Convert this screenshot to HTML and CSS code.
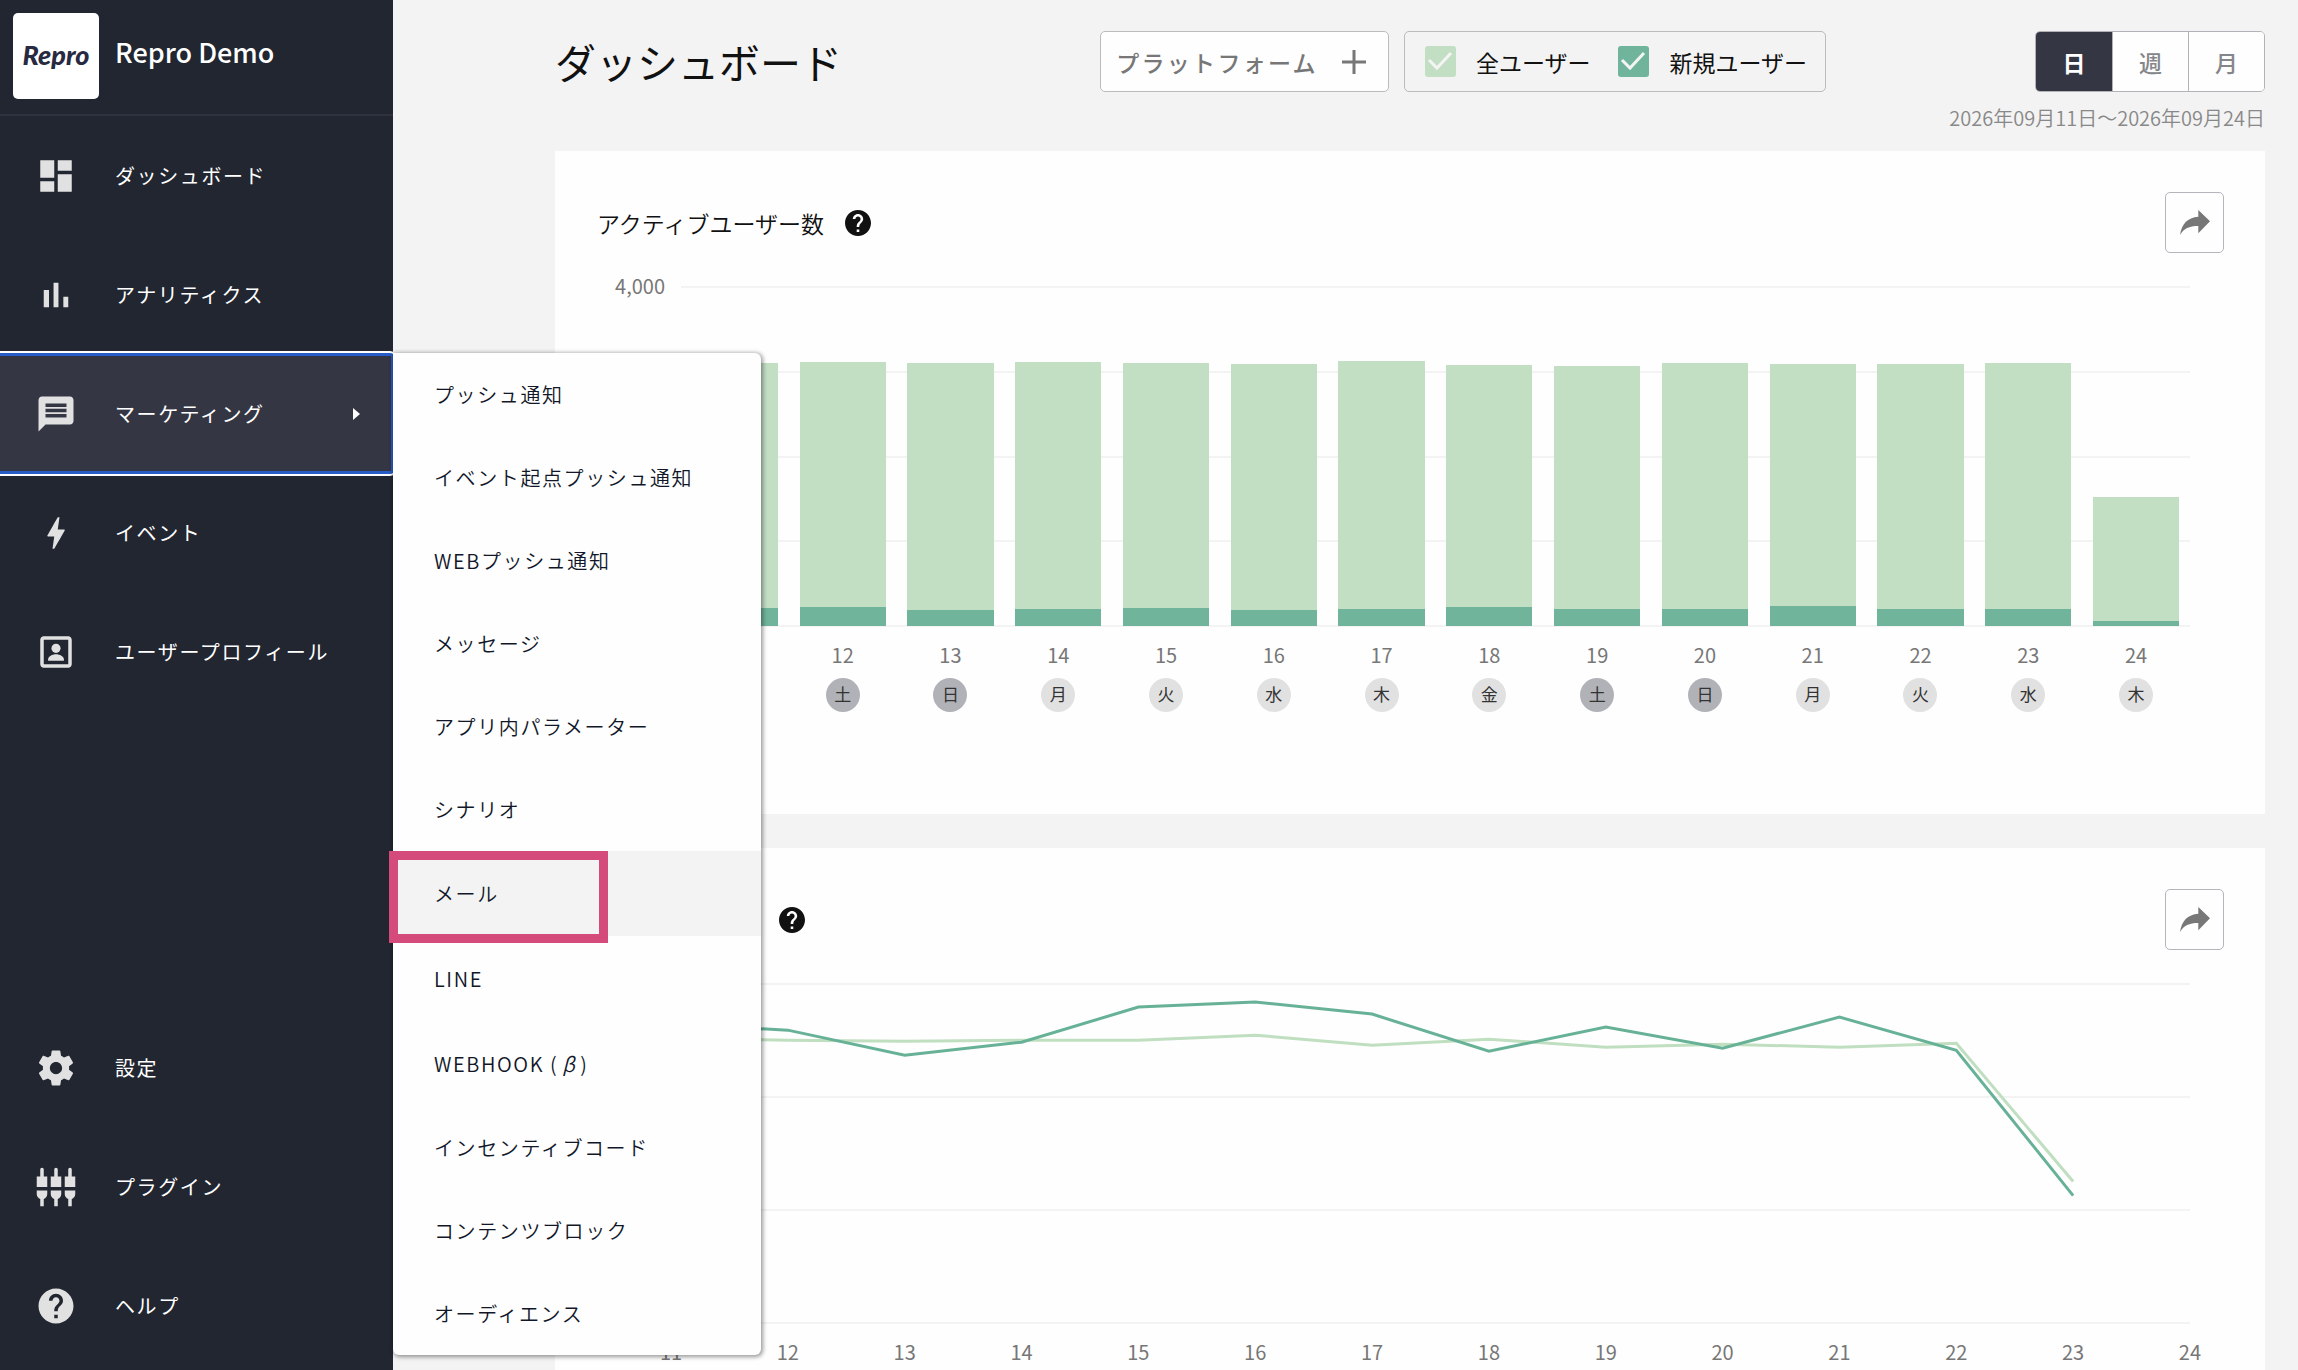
FILE: index.html
```html
<!DOCTYPE html>
<html lang="ja">
<head>
<meta charset="utf-8">
<meta name="viewport" content="width=device-width, initial-scale=1">
<title>ダッシュボード | Repro Demo</title>
<link rel="stylesheet" href="styles.css">
</head>
<body>
<div class="app">
  <aside class="sidebar">
    <div class="brand">
      <div class="brand-logo">Repro</div>
      <div class="brand-name">Repro Demo</div>
    </div>
    <nav class="nav">
      <ul class="nav-list">
        <li class="nav-item"><a class="nav-link" href="#">
          <svg class="icon" viewBox="0 0 24 24"><path d="M3 13h8V3H3v10zm0 8h8v-6H3v6zm10 0h8V11h-8v10zm0-18v6h8V3h-8z"/></svg>
          <span>ダッシュボード</span></a></li>
        <li class="nav-item"><a class="nav-link" href="#">
          <svg class="icon" viewBox="0 0 24 24"><path d="M5 9.2h3V19H5zM10.6 5h2.8v14h-2.8zm5.6 8H19v6h-2.8z"/></svg>
          <span>アナリティクス</span></a></li>
        <li class="nav-item">
          <a class="nav-link nav-link-active" href="#">
            <svg class="icon" viewBox="0 0 24 24"><path d="M20 2H4c-1.1 0-1.99.9-1.99 2L2 22l4-4h14c1.1 0 2-.9 2-2V4c0-1.1-.9-2-2-2zm-2 12H6v-2h12v2zm0-3H6V9h12v2zm0-3H6V6h12v2z"/></svg>
            <span>マーケティング</span>
            <svg class="caret" viewBox="0 0 7 12"><path d="M0 0l7 6-7 6z"/></svg>
          </a>
          <ul class="flyout">
            <li><a class="flyout-link" href="#">プッシュ通知</a></li>
            <li><a class="flyout-link" href="#">イベント起点プッシュ通知</a></li>
            <li><a class="flyout-link" href="#">WEBプッシュ通知</a></li>
            <li><a class="flyout-link" href="#">メッセージ</a></li>
            <li><a class="flyout-link" href="#">アプリ内パラメーター</a></li>
            <li><a class="flyout-link" href="#">シナリオ</a></li>
            <li class="flyout-marked"><a class="flyout-link flyout-link-tall flyout-link-hover" href="#">メール</a></li>
            <li><a class="flyout-link flyout-link-tall" href="#">LINE</a></li>
            <li><a class="flyout-link flyout-link-tall" href="#">WEBHOOK (<i class="beta">β</i>)</a></li>
            <li><a class="flyout-link" href="#">インセンティブコード</a></li>
            <li><a class="flyout-link" href="#">コンテンツブロック</a></li>
            <li><a class="flyout-link" href="#">オーディエンス</a></li>
          </ul>
        </li>
        <li class="nav-item"><a class="nav-link" href="#">
          <svg class="icon" viewBox="0 0 24 24"><path d="M11 21h-1l1-7H7.5c-.58 0-.57-.32-.38-.66.19-.34.05-.08.07-.12C8.48 10.94 10.42 7.54 13 3h1l-1 7h3.5c.49 0 .56.33.47.51l-.07.15C12.96 17.55 11 21 11 21z"/></svg>
          <span>イベント</span></a></li>
        <li class="nav-item"><a class="nav-link" href="#">
          <svg class="icon" viewBox="0 0 24 24"><path d="M19 5v14H5V5h14m0-2H5c-1.1 0-2 .9-2 2v14c0 1.1.9 2 2 2h14c1.1 0 2-.9 2-2V5c0-1.1-.9-2-2-2z"/><circle cx="12" cy="9.9" r="2.6"/><path d="M7.5 17v-.7c0-1.8 2.4-3 4.5-3s4.5 1.2 4.5 3v.7z"/></svg>
          <span>ユーザープロフィール</span></a></li>
      </ul>
      <ul class="nav-list nav-list-bottom">
        <li class="nav-item"><a class="nav-link" href="#">
          <svg class="icon" viewBox="0 0 24 24"><path d="M19.43 12.98c.04-.32.07-.64.07-.98s-.03-.66-.07-.98l2.11-1.65c.19-.15.24-.42.12-.64l-2-3.46c-.12-.22-.39-.3-.61-.22l-2.49 1c-.52-.4-1.08-.73-1.69-.98l-.38-2.65C14.46 2.18 14.25 2 14 2h-4c-.25 0-.46.18-.49.42l-.38 2.65c-.61.25-1.17.59-1.69.98l-2.49-1c-.23-.09-.49 0-.61.22l-2 3.46c-.13.22-.07.49.12.64l2.11 1.65c-.04.32-.07.65-.07.98s.03.66.07.98l-2.11 1.65c-.19.15-.24.42-.12.64l2 3.46c.12.22.39.3.61.22l2.49-1c.52.4 1.08.73 1.69.98l.38 2.65c.03.24.24.42.49.42h4c.25 0 .46-.18.49-.42l.38-2.65c.61-.25 1.17-.59 1.69-.98l2.49 1c.23.09.49 0 .61-.22l2-3.46c.12-.22.07-.49-.12-.64l-2.11-1.65zM12 15.5c-1.93 0-3.5-1.57-3.5-3.5s1.57-3.5 3.5-3.5 3.5 1.57 3.5 3.5-1.57 3.5-3.5 3.5z"/></svg>
          <span>設定</span></a></li>
        <li class="nav-item"><a class="nav-link" href="#">
          <svg class="icon" viewBox="0 0 24 24"><path d="M5 2c0-.55-.45-1-1-1s-1 .45-1 1v4H1v6h6V6H5V2zm4 14c0 1.3.84 2.4 2 2.82V23h2v-4.18c1.16-.41 2-1.51 2-2.82v-2H9v2zm-8 0c0 1.3.84 2.4 2 2.82V23h2v-4.18C6.16 18.4 7 17.3 7 16v-2H1v2zM21 6V2c0-.55-.45-1-1-1s-1 .45-1 1v4h-2v6h6V6h-2zm-8-4c0-.55-.45-1-1-1s-1 .45-1 1v4H9v6h6V6h-2V2zm4 14c0 1.3.84 2.4 2 2.82V23h2v-4.18c1.16-.41 2-1.51 2-2.82v-2h-6v2z"/></svg>
          <span>プラグイン</span></a></li>
        <li class="nav-item"><a class="nav-link" href="#">
          <svg class="icon" viewBox="0 0 24 24"><path d="M12 2C6.48 2 2 6.48 2 12s4.48 10 10 10 10-4.48 10-10S17.52 2 12 2zm1 17h-2v-2h2v2zm2.07-7.75l-.9.92C13.45 12.9 13 13.5 13 15h-2v-.5c0-1.1.45-2.1 1.17-2.83l1.24-1.26c.37-.36.59-.86.59-1.41 0-1.1-.9-2-2-2s-2 .9-2 2H8c0-2.21 1.79-4 4-4s4 1.79 4 4c0 .88-.36 1.68-.93 2.25z"/></svg>
          <span>ヘルプ</span></a></li>
      </ul>
    </nav>
  </aside>

  <main class="main">
    <header class="header">
      <h1 class="title">ダッシュボード</h1>
      <div class="filters">
        <button class="platform" type="button">プラットフォーム
          <svg class="plus" viewBox="0 0 24 24"><path d="M12 0v24M0 12h24"/></svg>
        </button>
        <div class="segments">
          <label class="check"><input class="checkbox checkbox-all" type="checkbox" checked>全ユーザー</label>
          <label class="check"><input class="checkbox checkbox-new" type="checkbox" checked>新規ユーザー</label>
        </div>
      </div>
      <div class="period">
        <div class="period-tabs">
          <button class="period-tab period-tab-active" type="button">日</button>
          <button class="period-tab" type="button">週</button>
          <button class="period-tab" type="button">月</button>
        </div>
        <p class="period-range">2026年09月11日〜2026年09月24日</p>
      </div>
    </header>

    <section class="card">
      <div class="card-head">
        <h2 class="card-title">アクティブユーザー数</h2>
        <svg class="help" viewBox="2 2 20 20"><path d="M12 2C6.48 2 2 6.48 2 12s4.48 10 10 10 10-4.48 10-10S17.52 2 12 2zm1 17h-2v-2h2v2zm2.07-7.75l-.9.92C13.45 12.9 13 13.5 13 15h-2v-.5c0-1.1.45-2.1 1.17-2.83l1.24-1.26c.37-.36.59-.86.59-1.41 0-1.1-.9-2-2-2s-2 .9-2 2H8c0-2.21 1.79-4 4-4s4 1.79 4 4c0 .88-.36 1.68-.93 2.25z"/></svg>
        <button class="share" type="button" aria-label="共有"><svg viewBox="0 0 30 25"><path d="M30 11.3L18.3 0v6.7C7.5 7.5 1.5 14 0 25c4-6.500 9-9 18.300-9v7.300z"/></svg></button>
      </div>
      <div class="chart">
        <div class="axis-y">4,000</div>
        <div class="plot">
          <div class="grid"><i></i><i></i><i></i><i></i><i></i></div>
          <div class="bars">
            <div class="bar" style="height:77.500%"><b style="height:18px"></b></div>
            <div class="bar" style="height:78%"><b style="height:19px"></b></div>
            <div class="bar" style="height:77.600%"><b style="height:16px"></b></div>
            <div class="bar" style="height:77.800%"><b style="height:17px"></b></div>
            <div class="bar" style="height:77.500%"><b style="height:18px"></b></div>
            <div class="bar" style="height:77.200%"><b style="height:16px"></b></div>
            <div class="bar" style="height:78.200%"><b style="height:17px"></b></div>
            <div class="bar" style="height:77%"><b style="height:19px"></b></div>
            <div class="bar" style="height:76.800%"><b style="height:17px"></b></div>
            <div class="bar" style="height:77.500%"><b style="height:17px"></b></div>
            <div class="bar" style="height:77.200%"><b style="height:20px"></b></div>
            <div class="bar" style="height:77.200%"><b style="height:17px"></b></div>
            <div class="bar" style="height:77.500%"><b style="height:17px"></b></div>
            <div class="bar" style="height:38%"><b style="height:5px"></b></div>
          </div>
        </div>
        <ol class="days">
          <li>11<span class="dow">金</span></li>
          <li>12<span class="dow dow-off">土</span></li>
          <li>13<span class="dow dow-off">日</span></li>
          <li>14<span class="dow">月</span></li>
          <li>15<span class="dow">火</span></li>
          <li>16<span class="dow">水</span></li>
          <li>17<span class="dow">木</span></li>
          <li>18<span class="dow">金</span></li>
          <li>19<span class="dow dow-off">土</span></li>
          <li>20<span class="dow dow-off">日</span></li>
          <li>21<span class="dow">月</span></li>
          <li>22<span class="dow">火</span></li>
          <li>23<span class="dow">水</span></li>
          <li>24<span class="dow">木</span></li>
        </ol>
      </div>
    </section>

    <section class="card">
      <div class="card-head">
        <h2 class="card-title">リテンション率</h2>
        <svg class="help" viewBox="2 2 20 20"><path d="M12 2C6.48 2 2 6.48 2 12s4.48 10 10 10 10-4.48 10-10S17.52 2 12 2zm1 17h-2v-2h2v2zm2.07-7.75l-.9.92C13.45 12.9 13 13.5 13 15h-2v-.5c0-1.1.45-2.1 1.17-2.83l1.24-1.26c.37-.36.59-.86.59-1.41 0-1.1-.9-2-2-2s-2 .9-2 2H8c0-2.21 1.79-4 4-4s4 1.79 4 4c0 .88-.36 1.68-.93 2.25z"/></svg>
        <button class="share" type="button" aria-label="共有"><svg viewBox="0 0 30 25"><path d="M30 11.3L18.3 0v6.7C7.5 7.5 1.5 14 0 25c4-6.500 9-9 18.300-9v7.300z"/></svg></button>
      </div>
      <div class="line-chart">
        <div class="plot">
          <div class="grid"><i></i><i></i><i></i><i></i></div>
          <svg class="lines" viewBox="0 0 1300 338" preserveAspectRatio="none">
            <polyline class="line-all" points="0,54 100,56 200,57 300,56 400,56 500,51 600,61 700,55 800,63 900,60 1000,63 1100,59 1200,197"/>
            <polyline class="line-new" points="0,40 100,46 200,71 300,58 400,23 500,18 600,30 700,67 800,43 900,64 1000,33 1100,66 1200,211"/>
          </svg>
        </div>
        <ol class="ticks">
          <li>11</li><li>12</li><li>13</li><li>14</li><li>15</li><li>16</li><li>17</li><li>18</li><li>19</li><li>20</li><li>21</li><li>22</li><li>23</li><li>24</li>
        </ol>
      </div>
    </section>
  </main>
</div>
</body>
</html>
```
FILE: styles.css
```css
*,
*::after {
  box-sizing: border-box;
}

body {
  margin: 0;
  background: #f3f3f3;
  color: #111;
  font-family: "Noto Sans CJK JP", "Noto Sans", sans-serif;
  font-size: 20px;
}

ul,
ol,
h1,
h2,
p {
  margin: 0;
  padding: 0;
  list-style: none;
  font-weight: 400;
}

a {
  color: inherit;
  text-decoration: none;
}

button {
  margin: 0;
  padding: 0;
  font: inherit;
  cursor: pointer;
}

.app {
  display: flex;
  height: 100vh;
  overflow: hidden;
}

/* Sidebar */

.sidebar {
  position: relative;
  z-index: 2;
  display: flex;
  flex: none;
  flex-direction: column;
  width: 393px;
  background: #212631;
  color: #fff;
}

.brand {
  display: flex;
  gap: 16px;
  height: 116px;
  padding: 13px;
  border-bottom: 2px solid #30313f;
}

.brand-logo {
  display: flex;
  align-items: center;
  justify-content: center;
  width: 86px;
  height: 86px;
  padding-bottom: 4px;
  border-radius: 5px;
  background: #fff;
  color: #272a40;
  font: italic 900 27px/1 Lato, sans-serif;
}

.brand-name {
  font-size: 27px;
  font-weight: 500;
  line-height: 78px;
}

.nav {
  display: flex;
  flex: 1;
  flex-direction: column;
}

.nav-list-bottom {
  margin-top: auto;
  padding-bottom: 5px;
}

.nav-item {
  position: relative;
}

.nav-link {
  display: flex;
  align-items: center;
  gap: 38px;
  height: 119px;
  padding: 0 33px 0 35px;
  letter-spacing: 0.08em;
}

.nav-link-active {
  border-radius: 0 3px 3px 0;
  background: #353643;
  box-shadow:
    inset 0 2px #265dc6,
    inset 0 -2px #265dc6,
    inset -2px 0 #265dc6,
    0 0 0 1px #265dc6,
    0 0 0 3px #fff;
}

.icon {
  flex: none;
  width: 42px;
  height: 42px;
  fill: #e1e1e1;
}

.caret {
  width: 7px;
  height: 12px;
  margin-left: auto;
  fill: #fff;
}

/* Flyout menu */

.flyout {
  position: absolute;
  top: -1px;
  left: 100%;
  width: 368px;
  border-radius: 0 6px 6px 6px;
  background: #fefefe;
  box-shadow: 1px 1px 4px 1px rgba(0, 0, 0, 0.4);
  color: #111729;
}

.flyout-link {
  display: flex;
  align-items: center;
  height: 83px;
  padding: 0 41px;
  font-weight: 350;
  letter-spacing: 0.08em;
  white-space: pre;
}

.flyout-link-tall {
  height: 85px;
}

.flyout-link-hover {
  background: #f3f3f3;
}

.flyout-marked {
  position: relative;
}

.flyout-marked::after {
  position: absolute;
  top: 0;
  left: -4px;
  width: 219px;
  height: 92px;
  border: 9px solid #d44b7b;
  content: "";
  pointer-events: none;
}

.beta {
  width: 22px;
  text-align: center;
}

/* Header */

.main {
  flex: 1;
  min-width: 0;
  padding: 31px 33px 34px 162px;
}

.header {
  display: flex;
  height: 120px;
}

.title {
  flex: 1;
  font-size: 41px;
  line-height: 61px;
}

.filters {
  display: flex;
  gap: 15px;
  height: 61px;
  margin-right: 115px;
}

.platform {
  display: flex;
  align-items: center;
  gap: 24px;
  padding: 0 22px 0 15px;
  border: 1px solid #bbb;
  border-radius: 5px;
  background: #fefefe;
  color: #777;
  font-size: 23px;
  font-weight: 500;
  letter-spacing: 0.1em;
}

.plus {
  width: 24px;
  height: 24px;
  stroke: #777;
  stroke-width: 3;
}

.segments {
  display: flex;
  align-items: center;
  gap: 28px;
  padding: 0 18px 0 20px;
  border: 1px solid #bbb;
  border-radius: 5px;
}

.check {
  display: flex;
  align-items: center;
  gap: 20px;
  font-size: 23px;
}

.checkbox {
  width: 31px;
  height: 31px;
  margin: 0;
  border-radius: 3px;
  appearance: none;
  background: url("data:image/svg+xml,%3Csvg xmlns='http://www.w3.org/2000/svg' viewBox='0 0 31 31'%3E%3Cpath d='M4 14l8 8L26 7' fill='none' stroke='%23f4f4f4' stroke-width='3'/%3E%3C/svg%3E");
}

.checkbox-all {
  background-color: #c2dec3;
}

.checkbox-new {
  background-color: #70b49b;
}

.period {
  display: flex;
  flex-direction: column;
  align-items: flex-end;
  min-width: 324px;
}

.period-tabs {
  display: flex;
  height: 61px;
  border: 1px solid #b2b3b8;
  border-radius: 5px;
  overflow: hidden;
}

.period-tab {
  width: 76px;
  border: 0;
  background: #fefefe;
  color: #85868b;
  font-size: 23px;
  font-weight: 500;
}

.period-tab + .period-tab {
  border-left: 1px solid #b2b3b8;
}

.period-tab.period-tab-active {
  background: #353643;
  color: #fff;
  font-weight: 700;
}

.period-range {
  margin-top: 11px;
  color: #888;
  font-weight: 350;
  line-height: 30px;
}

/* Cards */

.card {
  height: 663px;
  margin-bottom: 34px;
  padding: 41px 41px 0 42px;
  background: #fefefe;
}

.card-head {
  display: flex;
  align-items: center;
  height: 61px;
}

.card-title {
  font-size: 23px;
  font-weight: 350;
  line-height: 34px;
}

.help {
  width: 26px;
  height: 26px;
  margin-left: 21px;
  fill: #111;
}

.share {
  display: flex;
  align-items: center;
  justify-content: center;
  width: 59px;
  height: 61px;
  margin-left: auto;
  border: 1px solid #b5b5bb;
  border-radius: 5px;
  background: #fefefe;
}

.share svg {
  width: 30px;
  height: 25px;
  fill: #777;
}

/* Charts */

.chart {
  display: grid;
  grid-template-columns: 68px 1fr;
  column-gap: 16px;
  margin: 34px 34px 0 0;
  color: #777;
}

.axis-y {
  margin-top: -16px;
  line-height: 30px;
  text-align: right;
}

.plot {
  position: relative;
  height: 339px;
}

.grid {
  display: flex;
  flex-direction: column;
  justify-content: space-between;
  height: 340px;
}

.grid i {
  height: 2px;
  margin-top: -1px;
  background: #f3f3f3;
}

.bars {
  position: absolute;
  inset: 0;
  display: flex;
  align-items: flex-end;
  justify-content: space-around;
}

.bar {
  display: flex;
  flex: none;
  align-items: flex-end;
  width: 5.7142%;
  background: #c2dec3;
}

.bar b {
  flex: 1;
  background: #70b49b;
}

.days {
  display: flex;
  grid-column: 2;
  margin-top: 14px;
}

.days li {
  display: flex;
  flex: 1;
  flex-direction: column;
  align-items: center;
  gap: 8px;
  line-height: 30px;
}

.dow {
  width: 34px;
  height: 34px;
  border-radius: 50%;
  background: #e1e1e1;
  color: #333;
  font-size: 17px;
  line-height: 32px;
  text-align: center;
}

.dow-off {
  background: #b1b2b7;
}

.line-chart {
  margin: 34px 34px 0 74px;
  color: #777;
}

.lines {
  position: absolute;
  inset: 0;
  width: 100%;
  height: 100%;
  fill: none;
  stroke-width: 3;
}

.lines polyline {
  vector-effect: non-scaling-stroke;
}

.line-all {
  stroke: #c0dec0;
}

.line-new {
  stroke: #67b297;
}

.ticks {
  display: flex;
  justify-content: space-between;
  margin: 14px -20px 0;
}

.ticks li {
  width: 40px;
  line-height: 30px;
  text-align: center;
}
```
